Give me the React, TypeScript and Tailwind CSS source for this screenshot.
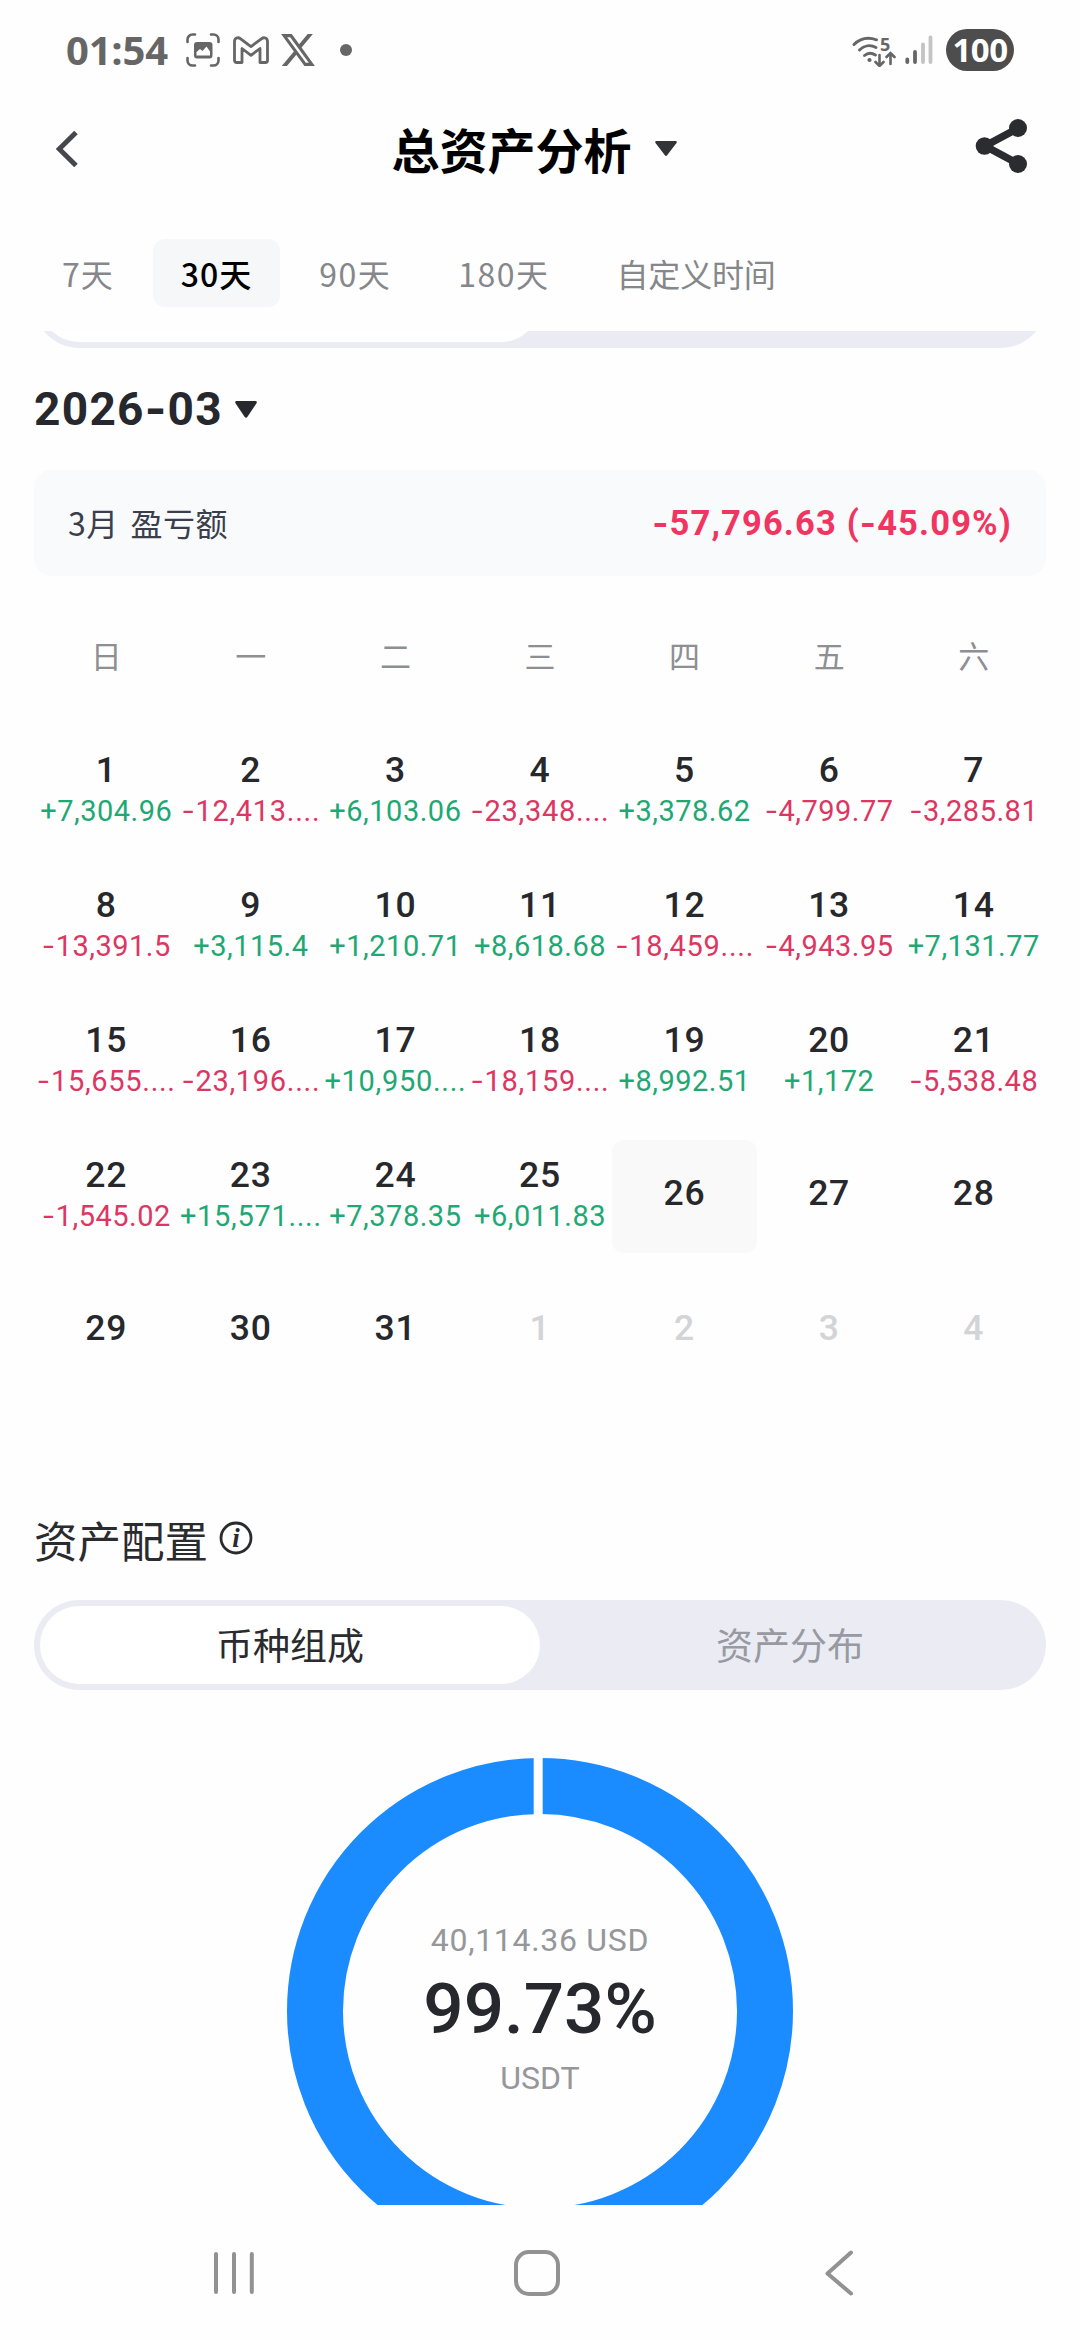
import clsx from 'clsx'

// ─── Types ────────────────────────────────────────────────────────────────────
interface Day {
  day: number
  pnl?: string
  today?: boolean
  muted?: boolean
}

const ranges = ['7天', '30天', '90天', '180天', '自定义时间']
const weekdays = ['日', '一', '二', '三', '四', '五', '六']

const days: Day[] = [
  { day: 1,  pnl: '+7,304.96' },
  { day: 2,  pnl: '-12,413....' },
  { day: 3,  pnl: '+6,103.06' },
  { day: 4,  pnl: '-23,348....' },
  { day: 5,  pnl: '+3,378.62' },
  { day: 6,  pnl: '-4,799.77' },
  { day: 7,  pnl: '-3,285.81' },
  { day: 8,  pnl: '-13,391.5' },
  { day: 9,  pnl: '+3,115.4' },
  { day: 10, pnl: '+1,210.71' },
  { day: 11, pnl: '+8,618.68' },
  { day: 12, pnl: '-18,459....' },
  { day: 13, pnl: '-4,943.95' },
  { day: 14, pnl: '+7,131.77' },
  { day: 15, pnl: '-15,655....' },
  { day: 16, pnl: '-23,196....' },
  { day: 17, pnl: '+10,950....' },
  { day: 18, pnl: '-18,159....' },
  { day: 19, pnl: '+8,992.51' },
  { day: 20, pnl: '+1,172' },
  { day: 21, pnl: '-5,538.48' },
  { day: 22, pnl: '-1,545.02' },
  { day: 23, pnl: '+15,571....' },
  { day: 24, pnl: '+7,378.35' },
  { day: 25, pnl: '+6,011.83' },
  { day: 26, today: true },
  { day: 27 },
  { day: 28 },
  { day: 29 },
  { day: 30 },
  { day: 31 },
  { day: 1, muted: true },
  { day: 2, muted: true },
  { day: 3, muted: true },
  { day: 4, muted: true },
]

// Roboto's hyphen is too short for a minus sign, so it is set in Inter
function Num({ value }: { value: string }) {
  return value.split(/(-)/).map((part, i) =>
    part === '-' ? <span key={i} className="font-[Inter]">-</span> : part,
  )
}

// ─── Status bar ───────────────────────────────────────────────────────────────
function StatusBar() {
  return (
    <header className="flex h-[100px] items-center justify-between px-[66px] text-[#666]">
      <div className="flex items-center">
        <span className="w-[120px] whitespace-nowrap font-['Open_Sans'] text-[40px] font-bold leading-none tracking-[-0.2px]">01:54</span>
        <svg className="h-[34px] w-[34px]" viewBox="0 0 34 34" fill="none">
          <path d="M1.5 9V6.5a5 5 0 0 1 5-5H9M25 1.5h2.5a5 5 0 0 1 5 5V9M32.5 25v2.5a5 5 0 0 1-5 5H25M9 32.5H6.5a5 5 0 0 1-5-5V25" stroke="currentColor" strokeWidth="2.6" strokeLinecap="round" />
          <rect x="8" y="9" width="18.5" height="16.5" rx="3" fill="currentColor" />
          <path d="M10.5 22.5v-3.5l3.5-3 2.5 2 4-4.5 3.500 5v4z" fill="#fefefe" />
        </svg>
        <svg className="ml-[13px] h-[28px] w-[36px]" viewBox="0 0 36 28" fill="none" stroke="currentColor" strokeWidth="2.8" strokeLinejoin="round">
          <path d="M1.5 5.5C1.5 2 5 .8 7.3 2.6L18 10.600 28.700 2.600C31 .8 34.500 2 34.500 5.500V24.500a2 2 0 0 1-2 2h-5.500V12.500L18 19.300 9 12.500v14H3.500a2 2 0 0 1-2-2z" />
        </svg>
        <svg className="ml-[12px] h-[32px] w-[34px]" viewBox="1.2 2.2 21.7 19.6" preserveAspectRatio="none" fill="currentColor">
          <path d="M18.244 2.25h3.308l-7.227 8.26 8.502 11.24H16.17l-5.214-6.817L4.99 21.75H1.68l7.73-8.835L1.254 2.25H8.08l4.713 6.231zm-1.161 17.52h1.833L7.084 4.126H5.117z" />
        </svg>
        <span className="ml-[25px] h-3 w-3 rounded-full bg-[#666]" />
      </div>

      <div className="flex items-center">
        <svg className="h-[34px] w-[46px]" viewBox="0 0 46 34" fill="none" stroke="currentColor" strokeWidth="2.9" strokeLinecap="round">
          <path d="M2 11.5C8 5.5 16.5 4 24.5 6.8" />
          <path d="M7.5 17C12 12.5 18.5 11.5 24 14.5" />
          <path d="M12.5 22.5c3-2.6 7-3 11-.5" />
          <path d="M27.5 22v11M23.5 29l4 4 4-4M38.5 31V20.5M34.5 24l4-4 4 4" strokeWidth="2.6" />
          <circle cx="17.5" cy="27" r="2.1" fill="currentColor" stroke="none" />
          <text x="28" y="17.5" fill="currentColor" stroke="none" className="font-['Open_Sans'] text-[18px] font-bold">5</text>
        </svg>
        <svg className="ml-[7px] h-[30px] w-[28px]" viewBox="0 0 28 30" stroke="currentColor" strokeWidth="3.8" strokeLinecap="round">
          <path d="M2.3 24.5v2.5M10 17v10" />
          <path d="M18 9.5v17.5M25.5 2.5v24.5" stroke="#c4c4c4" />
        </svg>
        <span className="ml-[13px] flex h-[42px] w-[68px] items-center justify-center rounded-full bg-[#4d4d4d] pb-[2px] font-['Open_Sans'] text-[33px] font-bold leading-none tracking-[-0.5px] text-white">100</span>
      </div>
    </header>
  )
}

function Caret({ className }: { className: string }) {
  return (
    <svg className={className} viewBox="0 0 22 16" preserveAspectRatio="none" fill="currentColor">
      <path d="M1.5 0h19a1.2 1.2 0 0 1 1 2L12.3 15a1.6 1.6 0 0 1-2.6 0L.5 2a1.2 1.2 0 0 1 1-2z" />
    </svg>
  )
}

// ─── Title bar ────────────────────────────────────────────────────────────────
function TitleBar() {
  return (
    <div className="flex h-[97px] items-center justify-between pl-[56px] pr-[53px]">
      <svg className="h-[36px] w-[22px]" viewBox="0 0 22 36" fill="none">
        <path d="M20 1.5L3.2 18 20 34.5" stroke="#46474c" strokeWidth="5" />
      </svg>
      <div className="flex items-center pl-[15px]">
        <h1 className="-mt-[2px] text-[48px] font-bold leading-none text-black">总资产分析</h1>
        <Caret className="ml-[23px] h-[15px] w-[22px] text-[#333438]" />
      </div>
      <svg className="-mt-[5px] h-[56px] w-[52px]" viewBox="0 0 52 56" fill="#2b2c2f" stroke="#2b2c2f">
        <path d="M43.5 10L10 28l33.5 18" fill="none" strokeWidth="7.5" />
        <circle cx="9.5" cy="28" r="8.8" stroke="none" />
        <circle cx="43" cy="10" r="9" stroke="none" />
        <circle cx="43" cy="46" r="9" stroke="none" />
      </svg>
    </div>
  )
}

function RangeTabs() {
  return (
    <nav className="flex h-[134px] items-start pl-[34px] pt-[42px]">
      {ranges.map((r, i) => (
        <button
          key={r}
          className={clsx(
            'mr-[11px] h-[68px] whitespace-nowrap rounded-[12px] px-[28px] text-[32px] leading-[68px]',
            i === 4 ? 'tracking-[-0.2px]' : i > 1 ? 'tracking-[1.5px]' : 'tracking-[1px]',
            i === 1 ? 'bg-[#f5f7f8] font-medium text-black' : 'text-[#85878a]',
          )}
        >
          {r}
        </button>
      ))}
    </nav>
  )
}

function Segmented({ left, right }: { left?: string; right?: string }) {
  return (
    <div className="flex h-[90px] shrink-0 rounded-full bg-[#ebecf3] p-[6px] text-[37px] leading-[76px]">
      <div className="flex-1 rounded-full bg-white text-center text-[#2a2b2e]">{left}</div>
      <div className="flex-1 text-center text-[#989aa3]">{right}</div>
    </div>
  )
}

// ─── Calendar ─────────────────────────────────────────────────────────────────
function Calendar() {
  return (
    <div className="shrink-0 font-[Roboto,'Noto_Sans_CJK_SC',sans-serif]">
      <div className="mt-[56px] grid h-[50px] grid-cols-7 text-center text-[31px] leading-[52px] text-[#8d8f92]">
        {weekdays.map(w => <span key={w}>{w}</span>)}
      </div>
      <div className="mt-[53px] grid grid-cols-7 gap-y-[22px]">
        {days.map(({ day, pnl, today, muted }, i) => (
          <div
            key={i}
            className={clsx(
              'flex h-[113px] flex-col items-center rounded-[12px]',
              pnl ? 'pt-[16px]' : 'pt-[34px]',
              today && 'bg-[#f9f9fa]',
            )}
          >
            <span className={clsx('text-[35.5px] font-medium leading-[38px] tracking-[0.8px]', muted ? 'text-[#d3d4d6]' : 'text-[#26282c]')}>
              {day}
            </span>
            {pnl && (
              <span
                className={clsx(
                  'mt-[5px] whitespace-nowrap text-[29px] leading-[34px]',
                  pnl.endsWith('....') ? 'tracking-[0.7px]' : 'tracking-[0.5px]',
                  pnl[0] === '+' ? 'text-[#1fa874]' : 'text-[#dc3663]',
                )}
              >
                <Num value={pnl} />
              </span>
            )}
          </div>
        ))}
      </div>
    </div>
  )
}

function Donut() {
  return (
    <div className="relative mx-auto mt-[68px] h-[506px] w-[506px] shrink-0">
      <svg className="h-full w-full" viewBox="0 0 506 506" fill="none">
        <circle cx="253" cy="253" r="225" stroke="#1b8cff" strokeWidth="56" />
        <path d="M251.2 0v60" stroke="#fefefe" strokeWidth="9" />
      </svg>
      {/* Label in the hole of the ring */}
      <div className="absolute inset-0 flex flex-col items-center pt-[163px] font-[Roboto]">
        <span className="whitespace-nowrap text-[32px] leading-[38px] tracking-[0.7px] text-[#95979a]">40,114.36 USD</span>
        <span className="mt-[10px] text-[71px] font-medium leading-[80px] text-[#26282d]">99.73%</span>
        <span className="mt-[10px] text-[32px] leading-[38px] text-[#95979a]">USDT</span>
      </div>
    </div>
  )
}

function SystemNav() {
  return (
    <footer className="flex h-[135px] items-center justify-between pl-[214px] pr-[227px]">
      <svg className="h-[46px] w-[40px]" viewBox="0 0 40 46" stroke="#929292" strokeWidth="4" strokeLinecap="round">
        <path d="M2 4v38M20 4v38M37.8 4v38" />
      </svg>
      <span className="mr-[6px] h-[46px] w-[46px] rounded-[15px] border-[4.5px] border-[#929292]" />
      <svg className="h-[46px] w-[28px]" viewBox="0 0 28 46" fill="none" stroke="#929292" strokeWidth="4" strokeLinecap="round" strokeLinejoin="round">
        <path d="M26 2.5L2.5 23.5 26 43.5" />
      </svg>
    </footer>
  )
}

export default function App() {
  return (
    <div className="flex h-[2340px] w-[1080px] flex-col overflow-hidden bg-[#fefefe] font-['Noto_Sans_CJK_SC',sans-serif]">
      <StatusBar />
      <TitleBar />
      <RangeTabs />

      <main className="flex h-[1874px] flex-col overflow-hidden px-[34px]">
        {/* Segmented control scrolled halfway under the tabs */}
        <div className="-mt-[73px] h-[90px] shrink-0">
          <Segmented />
        </div>

        <div className="mt-[32px] flex h-[56px] shrink-0 items-center text-[#26282e]">
          <span className="font-[Roboto] text-[46px] font-bold leading-none tracking-[1.3px]"><Num value="2026-03" /></span>
          <Caret className="ml-[12px] mt-[2px] h-[17px] w-[22px]" />
        </div>

        <section className="mt-[34px] flex h-[106px] shrink-0 items-center justify-between rounded-[18px] bg-[#f9fafb] px-[34px]">
          <span className="-mt-[2px] text-[32px] tracking-[0.5px] text-[#3a3f4b] [word-spacing:4px]">3月 盈亏额</span>
          <span className="font-[Roboto] text-[34.5px] font-bold tracking-[1.15px] text-[#ef3560]"><Num value="-57,796.63 (-45.09%)" /></span>
        </section>

        <Calendar />

        <div className="mt-[120px] flex h-[60px] shrink-0 items-center text-[#2a2b2e]">
          <h2 className="mt-[3px] text-[43.5px] leading-none">资产配置</h2>
          <svg className="ml-[11px] h-[34px] w-[34px]" viewBox="0 0 34 34" fill="none">
            <circle cx="17" cy="17" r="15" stroke="currentColor" strokeWidth="2.8" />
            <text x="17" y="25.5" textAnchor="middle" fill="currentColor" className="font-['Liberation_Serif'] text-[27px] font-bold italic">i</text>
          </svg>
        </div>

        <div className="mt-[32px] shrink-0">
          <Segmented left="币种组成" right="资产分布" />
        </div>
        <Donut />
      </main>

      <SystemNav />
    </div>
  )
}
